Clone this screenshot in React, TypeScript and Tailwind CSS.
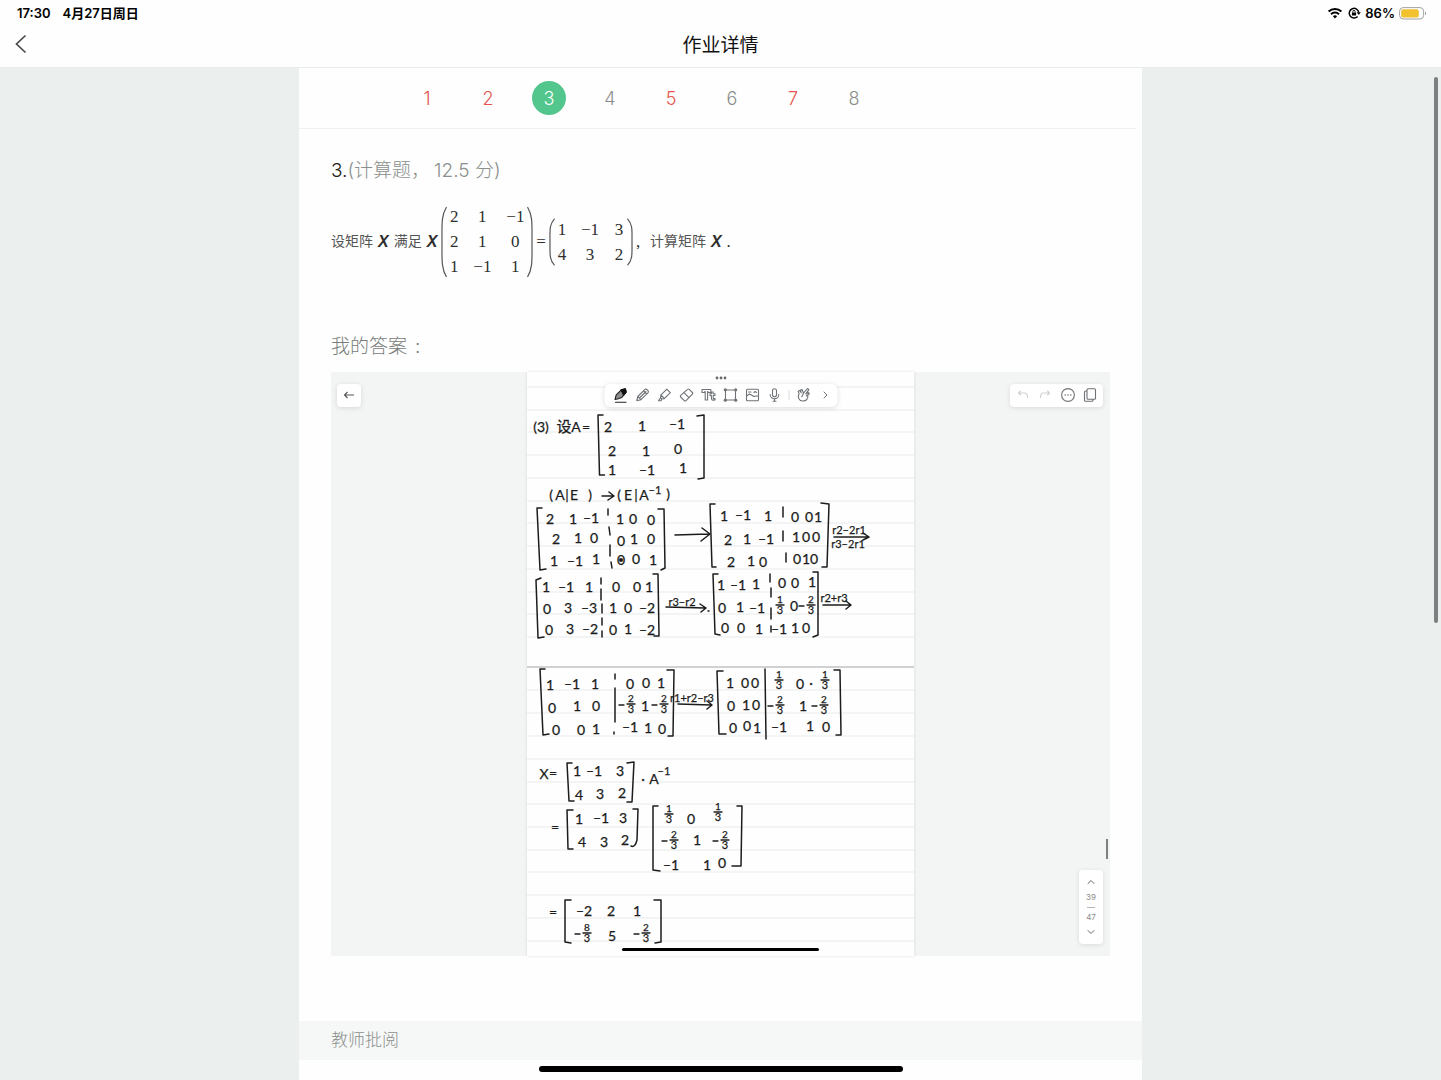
import React from "react";
import { ChevronDown, ChevronRight, ChevronUp } from "lucide-react";

const SANS = "font-['Inter','Noto_Sans_CJK_SC',sans-serif]";

/* ---------- status bar ---------- */

function StatusBar() {
  return (
    <div className="flex h-6 items-center justify-between pt-0.5 pr-3.5 pl-[17px] text-[13px] leading-6 font-semibold text-black">
      <div className="flex gap-3">
        <span>17:30</span>
        <span>4月27日周日</span>
      </div>
      <div className="flex items-center gap-1">
        <svg viewBox="0 0 16 12" className="h-3 w-4" aria-label="Wi-Fi">
          <path d="M1.600 4.600a9.200 9.200 0 0 1 12.800 0" fill="none" stroke="#000" strokeWidth="2.100" />
          <path d="M4 7.200a5.800 5.800 0 0 1 8 0" fill="none" stroke="#000" strokeWidth="2" />
          <path d="M8 11.400 5.900 9.200a3 3 0 0 1 4.200 0Z" fill="#000" />
        </svg>
        <svg viewBox="0 0 14 14" className="h-3.5 w-3.5" aria-label="方向锁定">
          <path d="M10.600 10.400a4.800 4.800 0 1 1 1.200-3.800" fill="none" stroke="#000" strokeWidth="1.500" />
          <path d="M9.700 6.300h4.100l-2 2.700Z" fill="#000" />
          <rect x="4.900" y="6.400" width="4.200" height="3.100" rx=".5" fill="#000" />
          <path d="M5.800 6.500V5.600a1.200 1.200 0 0 1 2.400 0v.9" fill="none" stroke="#000" strokeWidth=".9" />
        </svg>
        <span>86%</span>
        <svg viewBox="0 0 28 13" className="h-[13px] w-7" aria-label="电量">
          <rect x=".6" y=".6" width="24" height="11.400" rx="3.600" fill="none" stroke="#a3a3a0" />
          <rect x="2.200" y="2.200" width="17.600" height="8.200" rx="2" fill="#f2c12e" />
          <path d="M26 4.400c1.600.5 1.600 3.300 0 3.800Z" fill="#a3a3a0" />
        </svg>
      </div>
    </div>
  );
}

function NavBar() {
  return (
    <header className="relative flex h-11 items-center justify-center border-b border-[#e6ecea]">
      <button type="button" aria-label="返回" className="absolute top-2.5 left-3.5">
        <svg viewBox="0 0 14 20" className="h-5 w-3.5">
          <path d="M11.500 1.500 2.500 10l9 8.500" fill="none" stroke="#4a4a4a" strokeWidth="1.700" />
        </svg>
      </button>
      <h1 className="text-[19px] leading-6 text-[#111]">作业详情</h1>
    </header>
  );
}

/* ---------- question ---------- */

const QUESTIONS = [
  { n: 1, wrong: true },
  { n: 2, wrong: true },
  { n: 3, current: true },
  { n: 4 },
  { n: 5, wrong: true },
  { n: 6 },
  { n: 7, wrong: true },
  { n: 8 },
];

function QuestionTabs() {
  return (
    <nav className="mr-1.5 flex h-[61px] items-center gap-[27px] border-b border-[#edf2f0] pl-[111px]">
      {QUESTIONS.map((q) => (
        <button
          key={q.n}
          type="button"
          className={
            "flex h-[34px] w-[34px] items-center justify-center rounded-full pt-0.5 text-lg font-light " +
            (q.current ? "bg-[#52c68c] text-white" : q.wrong ? "text-[#e5534e]" : "text-[#8a8e8c]")
          }
        >
          {q.n}
        </button>
      ))}
    </nav>
  );
}

function Matrix({ rows, cols, tall }: { rows: string[][]; cols: string; tall?: boolean }) {
  const h = tall ? "h-[72px]" : "h-[48px]";
  return (
    <span className="flex items-center">
      <svg viewBox="0 0 6 72" preserveAspectRatio="none" className={"w-1.5 " + h}>
        <path d="M5.500 1C.2 10 1 18 1 36s-.8 26 4.500 35" fill="none" stroke="#555" strokeWidth="1.200" />
      </svg>
      <span className={"grid justify-items-center " + cols}>
        {rows.flat().map((v, i) => (
          <span key={i} className="leading-[25px]">
            {v}
          </span>
        ))}
      </span>
      <svg viewBox="0 0 6 72" preserveAspectRatio="none" className={"w-1.5 " + h}>
        <path d="M.5 1C5.800 10 5 18 5 36s.8 26-4.500 35" fill="none" stroke="#555" strokeWidth="1.200" />
      </svg>
    </span>
  );
}

function Formula() {
  return (
    <div className="flex items-center font-['Liberation_Serif','Noto_Sans_CJK_SC',serif] text-[17px] text-[#2e2e2e]">
      <span className="text-sm text-[#555]">设矩阵</span>
      <i className="mx-[5px] font-['Liberation_Sans',sans-serif] text-base font-bold">X</i>
      <span className="text-sm text-[#555]">满足</span>
      <i className="mr-1 ml-[5px] font-['Liberation_Sans',sans-serif] text-base font-bold">X</i>
      <Matrix
        tall
        cols="grid-cols-[14px_42px_24px]"
        rows={[
          ["2", "1", "−1"],
          ["2", "1", "0"],
          ["1", "−1", "1"],
        ]}
      />
      <span className="mx-[3px]">=</span>
      <Matrix
        cols="grid-cols-[14px_42px_16px]"
        rows={[
          ["1", "−1", "3"],
          ["4", "3", "2"],
        ]}
      />
      <span className="w-[17px] pl-[3px]">,</span>
      <span className="text-sm text-[#555]">计算矩阵</span>
      <i className="mx-[5px] font-['Liberation_Sans',sans-serif] text-base font-bold">X</i>
      <span>.</span>
    </div>
  );
}

/* ---------- handwritten page ---------- */

type Mark = [number, number, string];

/* Centre of each handwritten figure, in canvas units. */
const MARKS: Mark[] = [
  [541, 427, "(3)"], [564, 427, "设"], [576, 427, "A"], [586, 427, "="],
  [608, 427, "2"], [642, 426, "1"], [677, 424, "–1"],
  [612, 451, "2"], [646, 451, "1"], [678, 449, "0"],
  [612, 470, "1"], [647, 470, "–1"], [683, 468, "1"],

  [551, 495, "("], [560, 495, "A"], [567, 495, "|"], [574, 495, "E"], [590, 495, ")"],
  [619, 495, "("], [628, 495, "E"], [636, 495, "|"], [644, 495, "A"], [668, 494, ")"],

  [550, 519, "2"], [573, 519, "1"], [591, 518, "–1"], [620, 519, "1"], [633, 519, "0"], [651, 520, "0"],
  [556, 539, "2"], [578, 538, "1"], [594, 538, "0"], [621, 541, "0"], [634, 539, "1"], [651, 539, "0"],
  [554, 561, "1"], [575, 561, "–1"], [596, 559, "1"], [621, 560, "0"], [636, 559, "0"], [653, 560, "1"],

  [724, 516, "1"], [743, 515, "–1"], [768, 516, "1"], [795, 517, "0"], [809, 517, "0"], [818, 517, "1"],
  [728, 540, "2"], [747, 539, "1"], [766, 539, "–1"], [796, 537, "1"], [806, 537, "0"], [816, 537, "0"],
  [731, 562, "2"], [751, 561, "1"], [763, 562, "0"], [797, 559, "0"], [806, 559, "1"], [814, 559, "0"],

  [546, 587, "1"], [566, 587, "–1"], [589, 587, "1"], [616, 587, "0"], [637, 587, "0"], [649, 587, "1"],
  [547, 609, "0"], [568, 608, "3"], [589, 608, "–3"], [613, 608, "1"], [628, 608, "0"], [647, 608, "–2"],
  [549, 630, "0"], [570, 629, "3"], [590, 629, "–2"], [613, 630, "0"], [628, 629, "1"], [647, 630, "–2"],

  [721, 585, "1"], [738, 585, "–1"], [756, 584, "1"], [782, 583, "0"], [795, 583, "0"], [812, 582, "1"],
  [722, 608, "0"], [740, 607, "1"], [757, 608, "–1"], [794, 606, "0"],
  [725, 628, "0"], [741, 628, "0"], [759, 629, "1"], [779, 629, "–1"], [795, 628, "1"], [806, 628, "0"],

  [550, 685, "1"], [572, 684, "–1"], [595, 684, "1"], [630, 684, "0"], [646, 683, "0"], [661, 683, "1"],
  [552, 708, "0"], [577, 706, "1"], [596, 706, "0"], [645, 706, "1"],
  [556, 730, "0"], [581, 730, "0"], [596, 729, "1"], [630, 727, "–1"], [648, 728, "1"], [662, 729, "0"],

  [730, 683, "1"], [745, 683, "0"], [755, 683, "0"], [800, 684, "0"], [811, 683, "·"],
  [731, 706, "0"], [746, 705, "1"], [756, 705, "0"], [803, 706, "1"],
  [733, 728, "0"], [747, 726, "0"], [757, 728, "1"], [779, 727, "–1"], [810, 726, "1"], [826, 727, "0"],

  [544, 774, "X"], [553, 773, "="],
  [577, 771, "1"], [594, 771, "–1"], [620, 771, "3"],
  [579, 795, "4"], [600, 794, "3"], [622, 793, "2"],
  [643, 779, "·"], [654, 779, "A"],

  [555, 827, "="],
  [579, 819, "1"], [601, 818, "–1"], [623, 818, "3"],
  [582, 842, "4"], [604, 842, "3"], [625, 840, "2"],
  [691, 819, "0"], [697, 840, "1"],
  [671, 865, "–1"], [707, 865, "1"], [722, 863, "0"],

  [553, 912, "="],
  [584, 911, "–2"], [611, 911, "2"], [637, 911, "1"], [612, 936, "5"],
];

/* Smaller writing: exponents and the row operations over the arrows. */
const NOTES: Mark[] = [
  [655, 490, "–1"], [664, 771, "–1"],
  [849, 530, "r2–2r1"], [848, 544, "r3–2r1"], [682, 602, "r3–r2"],
  [834, 598, "r2+r3"], [692, 698, "r1+r2–r3"],
];

/* x, y of the fraction bar, numerator, denominator, minus sign in front. */
const FRACTIONS: [number, number, string, string, boolean][] = [
  [780, 605, "1", "3", false], [811, 605, "2", "3", true],
  [631, 704, "2", "3", true], [664, 704, "2", "3", true],
  [779, 680, "1", "3", false], [825, 680, "1", "3", false],
  [780, 705, "2", "3", true], [824, 705, "2", "3", true],
  [669, 814, "1", "3", false], [718, 812, "1", "3", false],
  [674, 840, "2", "3", true], [725, 840, "2", "3", true],
  [587, 933, "8", "3", true], [646, 933, "2", "3", true],
];

const STROKES = [
  /* brackets */
  "M603 415h-5l1.500 60h5M697 416l7-1v63l-6 1",
  "M542 508h-5l3 62 6-1M658 509h6l1 59-4 2",
  "M715 504h-5l2 63h4M821 503l8 1-2 63h-5",
  "M541 578l-5 2 2 58 6-1M653 574h5l1 62h-5",
  "M718 574h-5l2 60 5 1M813 572h5v63l-5 2",
  "M545 669h-5l3 66 6-1M667 670h7l-1 66h-5",
  "M723 671h-6l2 63h7M834 670h6l1 65h-5",
  "M572 763h-5l2 38h5M627 763l7-1-2 40h-5",
  "M573 810h-6l1 39h5M633 809h5l-1 31q-2 8-6 6",
  "M658 806h-5v64l7 1M737 806h5l-1 60h-9",
  "M571 900h-6v42l6 1M654 900h7v42l-6 1",
  /* augmented column dividers */
  "M608 509v6M609 527l1 8M610 545v11M611 562l1 6",
  "M783 507v10M783 531v10M786 553v9",
  "M601 578v6M601 589v11M602 604v9M602 618v7M602 631v6",
  "M770 574v8M771 588v9M771 608v11M771 626v6",
  "M615 674v5M615 688v34M614 732v2M765 669l1 70",
  /* arrows */
  "M602 496h11M609 492l5 4-6 4M675 535l33-1M702 528l8 6-9 7",
  "M834 537h34M863 533l6 4-6 3M666 607l39 1M700 604l6 4-5 4M708 611h1",
  "M823 605h27M846 601l5 4-5 4M678 704l33 1M707 701l5 4-5 4",
];

const RULES = [
  387, 410, 432, 455, 478, 501, 523, 546, 569, 592, 614, 637, 690, 713, 736, 759, 782, 804, 827, 850, 872, 895, 918, 941,
];

function Handwriting() {
  return (
    <svg
      viewBox="527 372 387 584"
      className="block h-auto w-full bg-[#fdfefd] font-['Lato','Noto_Sans_CJK_SC',sans-serif]"
      role="img"
      aria-label="手写答案"
    >
      {RULES.map((y) => (
        <path key={y} d={`M527 ${y}h387`} stroke="#e8ecea" />
      ))}
      <path d="M527 667h387" stroke="#bfc3c1" strokeWidth="1.500" />
      <g fill="none" stroke="#1c1c1c" strokeWidth="1.500" strokeLinecap="round" strokeLinejoin="round">
        {STROKES.map((d) => (
          <path key={d} d={d} />
        ))}
        {FRACTIONS.map(([x, y, , , minus]) => (
          <path key={`${x}-${y}`} d={`M${x - 4} ${y}h8` + (minus ? `M${x - 12} ${y + 1}h5` : "")} strokeWidth="1.300" />
        ))}
      </g>
      <circle cx="621" cy="560" r="2" fill="#1c1c1c" />
      <g fill="#1c1c1c" stroke="#1c1c1c" strokeWidth=".25" textAnchor="middle">
        {MARKS.map(([x, y, t]) => (
          <text key={`${x}-${y}`} x={x} y={y + 5} fontSize={t === "设" ? 15 : 14}>
            {t}
          </text>
        ))}
        {NOTES.map(([x, y, t]) => (
          <text key={`${x}-${y}`} x={x} y={y + 4} fontSize="11">
            {t}
          </text>
        ))}
        {FRACTIONS.map(([x, y, top, bottom]) => (
          <React.Fragment key={`${x}-${y}`}>
            <text x={x} y={y - 2} fontSize="10">
              {top}
            </text>
            <text x={x} y={y + 9} fontSize="11">
              {bottom}
            </text>
          </React.Fragment>
        ))}
      </g>
      <rect x="622" y="948" width="197" height="3" rx="1.500" fill="#000" />
    </svg>
  );
}

/* ---------- note app tools ---------- */

function Glyph({ children, color = "#6f7377" }: { children: React.ReactNode; color?: string }) {
  return (
    <svg
      viewBox="0 0 16 16"
      className="h-4 w-4"
      fill="none"
      stroke={color}
      strokeWidth="1.100"
      strokeLinecap="round"
      strokeLinejoin="round"
    >
      {children}
    </svg>
  );
}

const TOOLS: { label: string; art: React.ReactNode }[] = [
  {
    label: "钢笔",
    art: (
      <>
        <path d="m2.500 12.500 1.200-4.600 5.600-5.400 3.600-.6.700 3.300-4.200 5.200-4.400 1.600Z" fill="#8c8c8c" stroke="#222" />
        <path d="m8.500 3 4.400-1.200.8 3.400-2.500 3Z" fill="#111" stroke="#111" />
        <path d="M3 15.200h10.500" stroke="#222" />
      </>
    ),
  },
  {
    label: "铅笔",
    art: (
      <path d="m2.300 13.700 1-4.200 6.900-6.900a1.600 1.600 0 0 1 2.300 0l.9.9a1.600 1.600 0 0 1 0 2.300l-6.900 6.900ZM3.300 9.500l3.200 3.200M5 11l6.500-6.500M9 3.800l3.200 3.200M2.500 12.500l1 1" />
    ),
  },
  {
    label: "荧光笔",
    art: <path d="m2 13.700 2-3 .3-2.500 6-6 3.500 3.500-6 6-2.500.3-.8 1.700ZM4.500 8.200l3.300 3.300M4 10.700l1.300 1.300" />,
  },
  {
    label: "橡皮",
    art: <path d="M9 2.300a1.200 1.200 0 0 1 1.700 0l3.200 3.200a1.200 1.200 0 0 1 0 1.700L7.500 13.600a1.200 1.200 0 0 1-1.700 0l-3.600-3.600a1.200 1.200 0 0 1 0-1.700ZM5.500 5.600l5 5" />,
  },
  {
    label: "文字",
    art: (
      <path d="M1.500 5.500v-3h8.800v3H7.600v-1h-.5V13H4.700V4.500h-.5v1ZM9.500 6.800h1.400V5h1.800v1.800h1.800v1.700h-1.800v2.500q0 .7.900.6h.9V13q-3.600.7-3.600-1.700V8.500H9.500Z" />
    ),
  },
  {
    label: "选区",
    art: (
      <>
        <path d="M3 3h10v10H3Z" />
        <g fill="#6f7377" stroke="none">
          <circle cx="2.800" cy="2.800" r="1.600" />
          <circle cx="13.200" cy="2.800" r="1.600" />
          <circle cx="2.800" cy="13.200" r="1.600" />
          <circle cx="13.200" cy="13.200" r="1.600" />
        </g>
      </>
    ),
  },
  {
    label: "图片",
    art: <path d="M3 2.300h10a1 1 0 0 1 1 1v9.400a1 1 0 0 1-1 1H3a1 1 0 0 1-1-1V3.300a1 1 0 0 1 1-1ZM2 9l3-2 4.500 2.500 4.500-.8M4 5h2.500M9.500 5.500l1.200-1 1.200 1" />,
  },
  {
    label: "录音",
    art: <path d="M8 1.700a2 2 0 0 1 2 2v4a2 2 0 0 1-4 0v-4a2 2 0 0 1 2-2ZM3.700 7.500a4.300 4.300 0 0 0 8.600 0M8 12v2.300M6.500 14.300h3" />,
  },
];

function Toolbar() {
  return (
    <div className="absolute top-3 left-1/2 flex h-[23px] w-[233px] -translate-x-1/2 items-center justify-between rounded-md bg-white pr-1.5 pb-0.5 pl-2 shadow-[0_1px_5px_rgba(0,0,0,0.14)]">
      <div className="flex gap-1.5">
        {TOOLS.map((t) => (
          <button key={t.label} type="button" aria-label={t.label}>
            <Glyph>{t.art}</Glyph>
          </button>
        ))}
      </div>
      <span className="h-2.5 w-px bg-[#d9dbda]" />
      <div className="flex items-center gap-2">
        <button type="button" aria-label="手势">
          <Glyph>
            <path d="M3.600 6.600C1.700 9.800 3.300 13.900 7.300 14c3.600.1 5.600-2.600 5.100-6.100M3.600 6.600l-.9-2.400 1.500-.7 1.500 2.300M5.700 5.800 5 3l1.700-.4L8 6.200M8 6.200l4-4.700 1.400 1.100-3 4.300M10.400 6.900l2.600-1.500.8 1.400-3 2.200M6.300 9.700 8 6.200" />
          </Glyph>
        </button>
        <button type="button" aria-label="更多工具">
          <ChevronRight className="h-3 w-3 text-[#6f7377]" />
        </button>
      </div>
    </div>
  );
}

function AnswerSheet() {
  return (
    <div className="relative flex bg-[#f3f4f4]">
      <div className="flex-1" />
      <div className="w-[387px] shadow-[0_0_3px_rgba(0,0,0,0.12)]">
        <Handwriting />
      </div>
      <div className="flex-1" />

      <button
        type="button"
        aria-label="返回笔记"
        className="absolute top-3 left-1.5 flex h-[23px] w-6 items-center justify-center rounded bg-white pb-0.5 shadow-[0_1px_5px_rgba(0,0,0,0.12)]"
      >
        <svg viewBox="0 0 12 12" className="h-3 w-3" fill="none" stroke="#555" strokeWidth="1.100">
          <path d="M11 6H1.500M4.500 3l-3 3 3 3" />
        </svg>
      </button>

      <svg viewBox="0 0 12 4" className="absolute top-1 left-1/2 h-1 w-3 -translate-x-1/2" fill="#6a6a6a">
        <circle cx="2" cy="2" r="1.400" />
        <circle cx="6" cy="2" r="1.400" />
        <circle cx="10" cy="2" r="1.400" />
      </svg>
      <Toolbar />

      <div className="absolute top-3 right-[7px] flex h-[23px] w-[93px] items-center justify-around rounded bg-white px-0.5 pb-0.5 shadow-[0_1px_5px_rgba(0,0,0,0.1)]">
        <button type="button" aria-label="撤销">
          <Glyph color="#cfd1d0">
            <path d="M5.500 4 3.500 6l2 2M3.500 6h6q3 0 3 4.500" />
          </Glyph>
        </button>
        <button type="button" aria-label="重做">
          <Glyph color="#cfd1d0">
            <path d="m10.500 4 2 2-2 2M12.500 6h-6q-3 0-3 4.500" />
          </Glyph>
        </button>
        <button type="button" aria-label="更多">
          <Glyph>
            <circle cx="8" cy="8" r="6.400" />
            <path d="M5.200 8h.1M8 8h.1M10.800 8h.1" strokeWidth="1.500" />
          </Glyph>
        </button>
        <button type="button" aria-label="页面">
          <Glyph>
            <path d="M6 1.700h6.500a1 1 0 0 1 1 1v8.600a1 1 0 0 1-1 1H6a1 1 0 0 1-1-1V2.700a1 1 0 0 1 1-1ZM5 4H3.500a1 1 0 0 0-1 1v8.300a1 1 0 0 0 1 1h6.500a1 1 0 0 0 1-1v-1" />
          </Glyph>
        </button>
      </div>

      <div className="absolute right-0.5 bottom-[97px] h-5 w-0.5 bg-[#808080]" />
      <div className="absolute right-[7px] bottom-3 flex h-[74px] w-6 flex-col items-center justify-between rounded bg-white py-1.5 text-[8px] leading-[10px] text-[#8a8a8a] shadow-[0_1px_5px_rgba(0,0,0,0.1)]">
        <button type="button" aria-label="上一页">
          <ChevronUp className="h-3 w-3 text-[#666]" />
        </button>
        <span>39</span>
        <span className="h-px w-2 bg-[#b5b5b5]" />
        <span>47</span>
        <button type="button" aria-label="下一页">
          <ChevronDown className="h-3 w-3 text-[#666]" />
        </button>
      </div>
    </div>
  );
}

/* ---------- page ---------- */

export default function App() {
  return (
    <div className={"relative flex min-h-screen flex-col bg-[#fdfefd] " + SANS}>
      <StatusBar />
      <NavBar />
      <div className="flex flex-1 justify-center bg-[#ebefee]">
        <main className="flex w-full max-w-[843px] flex-col bg-[#fdfefd]">
          <QuestionTabs />
          <section className="px-8 pt-7">
            <h2 className="text-[19px] leading-7 font-light text-[#8b8f8d]">
              <span className="text-[#222]">3.</span>(计算题，
              <span className="ml-1">12.5 分)</span>
            </h2>
            <div className="pt-[19px]">
              <Formula />
            </div>
            <h3 className="pt-[54px] pb-[11px] text-[19px] leading-7 font-light text-[#777b79]">
              我的答案<span className="ml-2">:</span>
            </h3>
            <AnswerSheet />
          </section>
          <h3 className="mt-[65px] bg-[#f6f8f7] px-8 text-[17px] leading-[39px] font-light text-[#8b8f8d]">教师批阅</h3>
        </main>
      </div>
      <div className="absolute top-[77px] right-[3px] h-[546px] w-1 rounded-full bg-[#7d8080]" />
      <div className="absolute bottom-2 left-1/2 h-1.5 w-[364px] -translate-x-1/2 rounded-full bg-black" />
    </div>
  );
}
